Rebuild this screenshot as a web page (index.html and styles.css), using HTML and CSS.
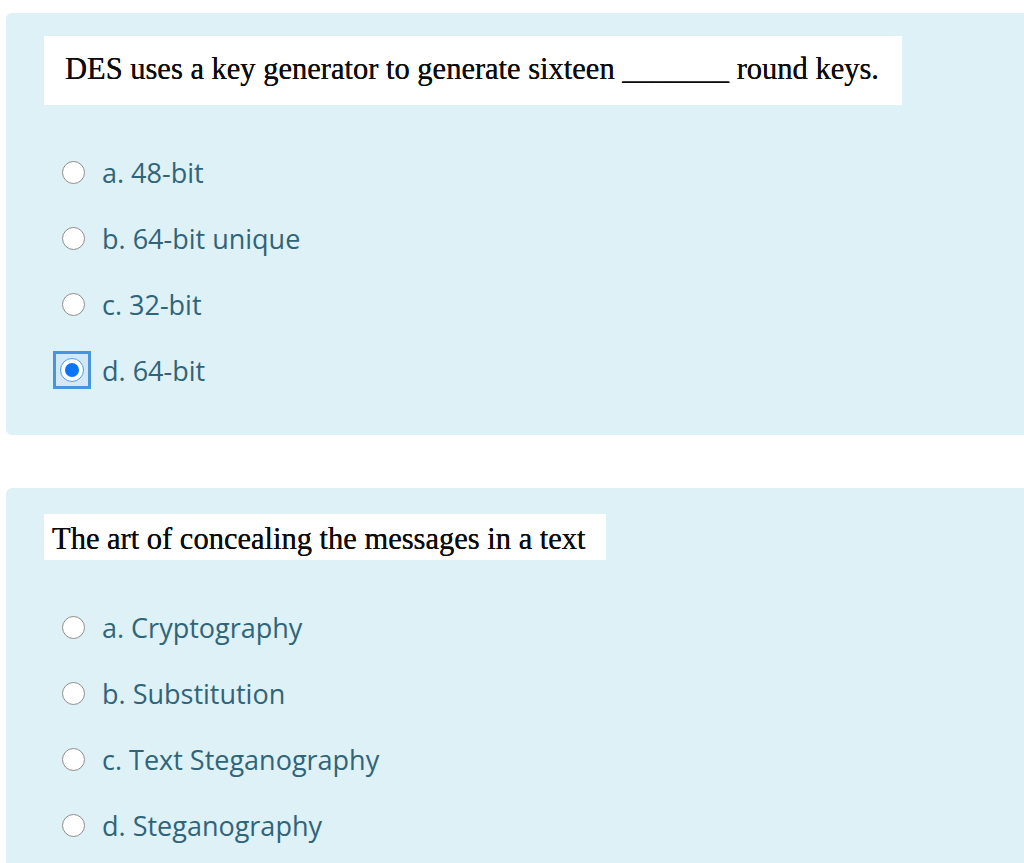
FILE: index.html
```html
<!DOCTYPE html>
<html lang="en">
<head>
<meta charset="utf-8">
<title>Quiz</title>
<link rel="stylesheet" href="styles.css">
</head>
<body>
<div class="page">
  <section class="card">
    <div class="qtext qtext-first">DES uses a key generator to generate sixteen <span class="blank">_______</span> round keys.</div>
    <ul class="answers">
      <li class="answer"><span class="radio"></span><span class="label">a. 48-bit</span></li>
      <li class="answer"><span class="radio"></span><span class="label">b. 64-bit unique</span></li>
      <li class="answer"><span class="radio"></span><span class="label">c. 32-bit</span></li>
      <li class="answer"><span class="radio-focus"><span class="radio radio-checked"></span></span><span class="label">d. 64-bit</span></li>
    </ul>
  </section>
  <section class="card card-second">
    <div class="qtext qtext-second">The art of concealing the messages in a text</div>
    <ul class="answers">
      <li class="answer"><span class="radio"></span><span class="label">a. Cryptography</span></li>
      <li class="answer"><span class="radio"></span><span class="label">b. Substitution</span></li>
      <li class="answer"><span class="radio"></span><span class="label">c. Text Steganography</span></li>
      <li class="answer"><span class="radio"></span><span class="label">d. Steganography</span></li>
    </ul>
  </section>
</div>
</body>
</html>
```
FILE: styles.css
```css
html, body {
  margin: 0;
  padding: 0;
  background: #ffffff;
  overflow: hidden;
}
.page {
  padding-top: 13px;
  display: flex;
  flex-direction: column;
  gap: 53px;
}
.card {
  margin: 0 -40px 0 6px;
  background: #def1f7;
  border-radius: 6px;
  padding: 23px 0 32px 38px;
}
.card-second {
  padding-top: 26px;
}
.qtext {
  display: inline-block;
  background: #ffffff;
  color: #0c0c0c;
  font-family: "Liberation Serif", "Times New Roman", serif;
  font-size: 30.5px;
  text-shadow: 0 0 0.4px #000;
}
.qtext-first {
  height: 69px;
  line-height: 66px;
  padding: 0 23px 0 21px;
}
.qtext-second {
  height: 46px;
  line-height: 50px;
  padding: 0 20px 0 8px;
}
.answers {
  list-style: none;
  margin: 34px 0 0 0;
  padding: 0;
}
.answer {
  height: 66px;
  display: flex;
  align-items: center;
  padding-left: 18px;
}
.radio {
  box-sizing: border-box;
  width: 23px;
  height: 23px;
  border-radius: 50%;
  border: 1px solid #8d8d8d;
  background: #ffffff;
  flex: none;
}
.radio-focus {
  box-sizing: border-box;
  width: 38px;
  height: 38px;
  margin-left: -9px;
  margin-right: -6px;
  background: #4a93dd;
  padding: 3px;
  display: flex;
  align-items: center;
  justify-content: center;
  flex: none;
}
.radio-checked {
  width: 32px;
  height: 32px;
  border-radius: 0;
  border: none;
  background: #d3e8f8;
  position: relative;
}
.radio-checked::before {
  content: "";
  position: absolute;
  left: 4px;
  top: 4px;
  width: 24px;
  height: 24px;
  box-sizing: border-box;
  border-radius: 50%;
  border: 1px solid #4d9be8;
  background: #ffffff;
}
.radio-checked::after {
  content: "";
  position: absolute;
  left: 9px;
  top: 9px;
  width: 14px;
  height: 14px;
  border-radius: 50%;
  background: #0a75f7;
}
.label {
  margin-left: 17px;
  font-family: "Open Sans", "Noto Sans", sans-serif;
  font-size: 27px;
  color: #2f6479;
}
```
